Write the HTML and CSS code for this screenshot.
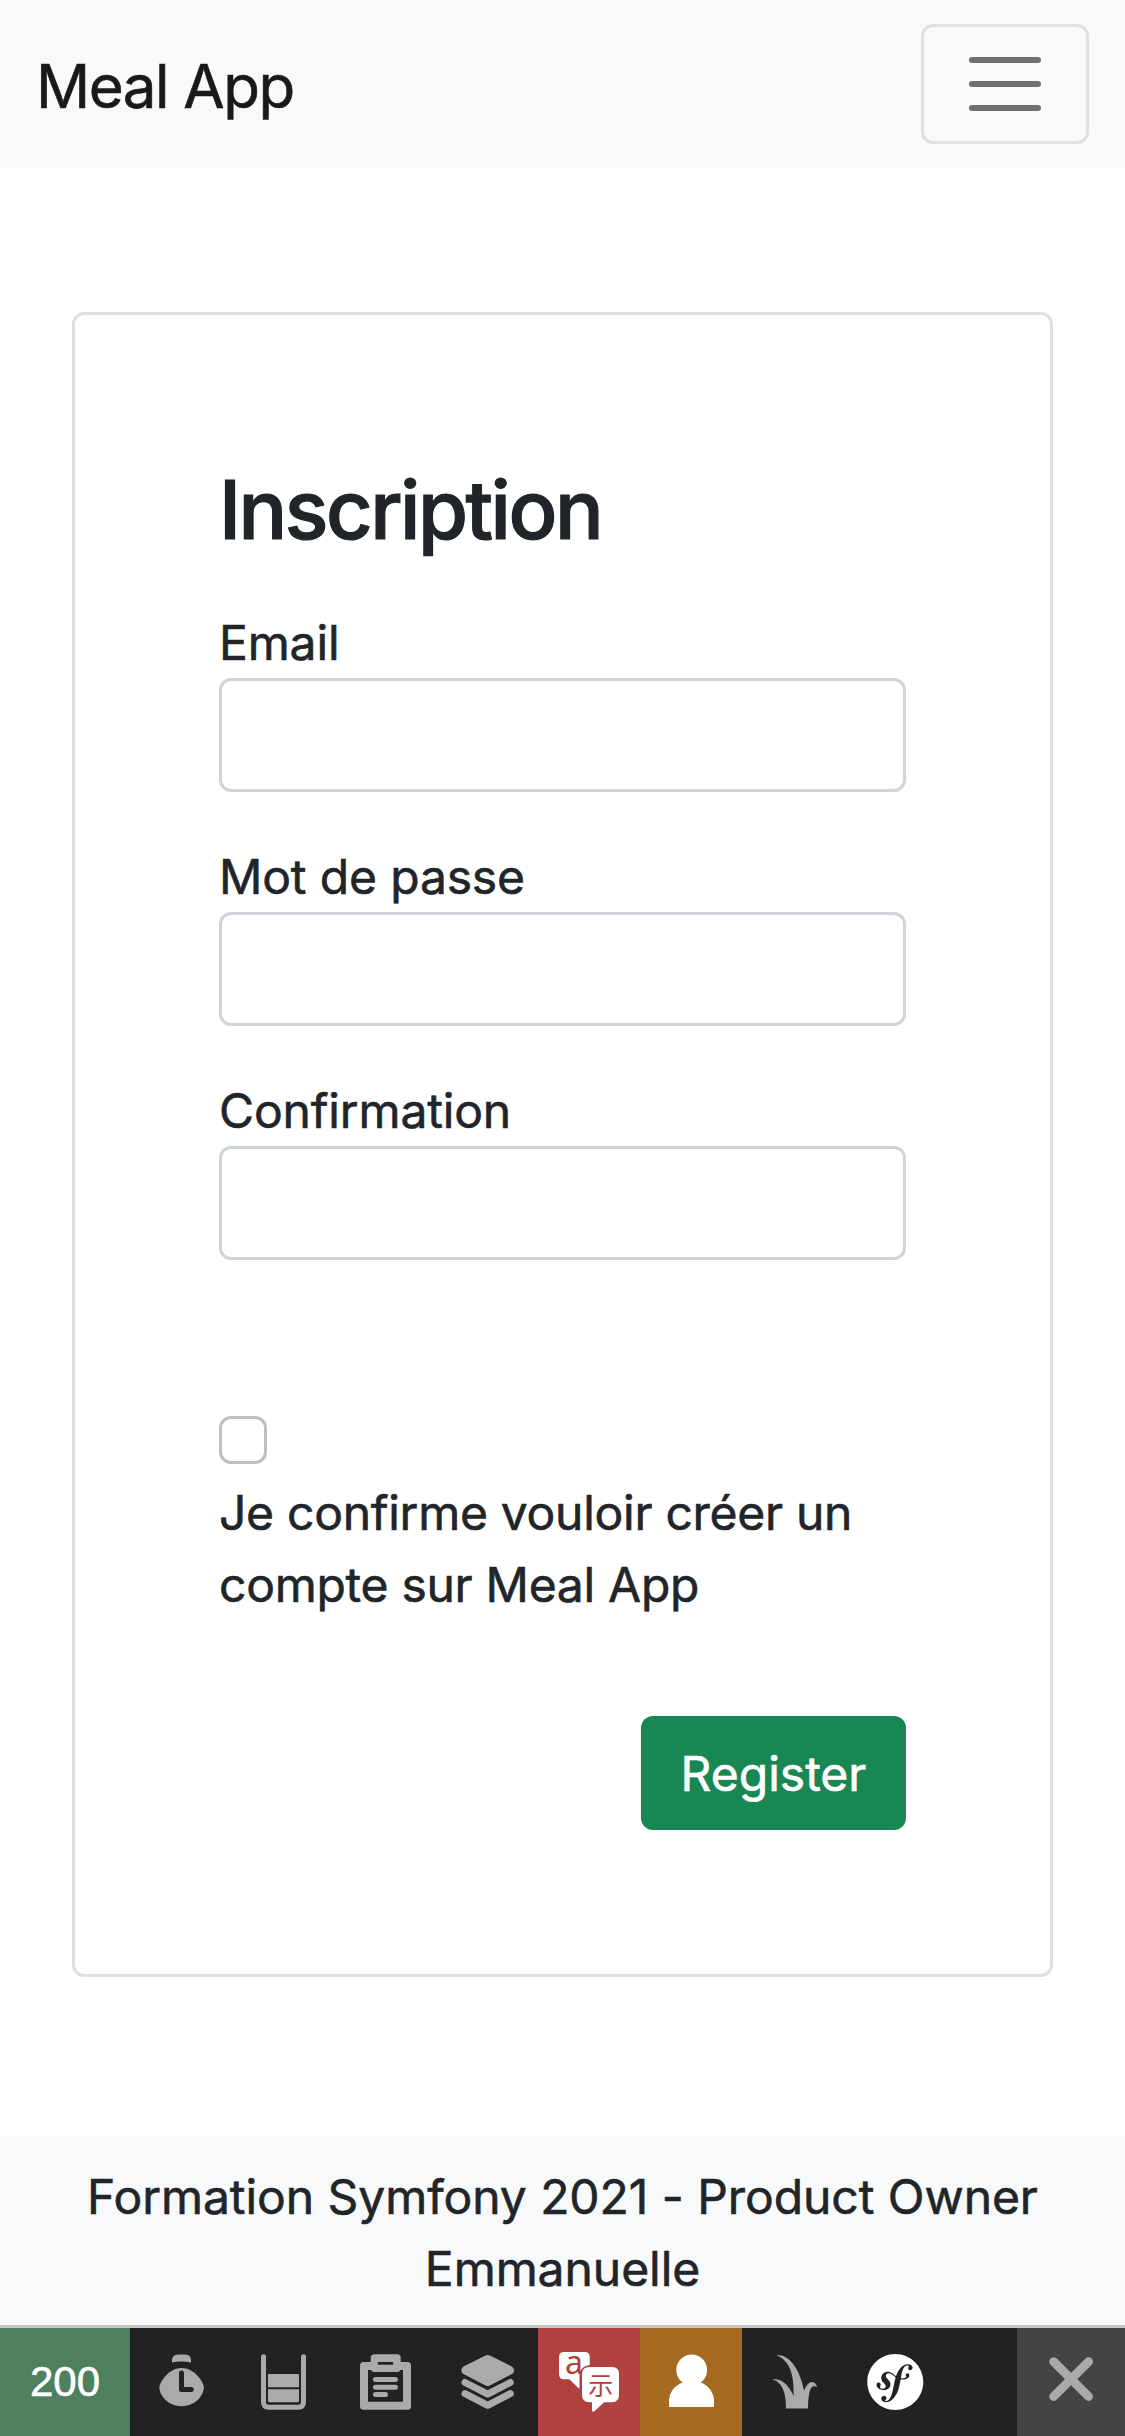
FILE: index.html
```html
<!DOCTYPE html>
<html lang="fr">
<head>
<meta charset="utf-8">
<title>Meal App</title>
<link rel="stylesheet" href="styles.css">
</head>
<body>
<nav class="navbar">
  <a class="brand">Meal App</a>
  <button class="toggler" type="button" aria-label="Menu">
    <span class="bar"></span><span class="bar"></span><span class="bar"></span>
  </button>
</nav>
<main class="main">
  <form class="card">
    <h1 class="title">Inscription</h1>
    <div class="field"><label class="label">Email</label><input class="input" type="text"></div>
    <div class="field"><label class="label">Mot de passe</label><input class="input" type="password"></div>
    <div class="field"><label class="label">Confirmation</label><input class="input" type="password"></div>
    <div class="confirm">
      <input class="check" type="checkbox">
      <label class="label agree">Je confirme vouloir créer un<br>compte sur Meal App</label>
    </div>
    <button class="submit" type="button">Register</button>
  </form>
</main>
<footer class="footer">Formation Symfony 2021 - Product Owner<br>Emmanuelle</footer>
<div class="toolbar">
  <div class="status">200</div>
  <div class="block"><svg class="icon" viewBox="0 0 102 108">
    <path d="M42 34.6V32.5Q42 26.5 48 26.5H55Q61 26.5 61 32.5V34.6Q51.5 32.2 42 34.6Z"/>
    <path d="M29.3 59C31 51.5 40 40 51.6 40S72.3 51.5 73.9 59C73.4 69.5 63.5 78.2 51.6 78.2S29.8 69.5 29.3 59Z"/>
    <path class="cut" d="M51.5 45V61.6H61.3"/>
  </svg></div>
  <div class="block"><svg class="icon" viewBox="0 0 102 108">
    <path class="line" d="M31.5 28.8V74Q31.5 79.2 36.7 79.2H66.3Q71.5 79.2 71.5 74V28.8"/>
    <path d="M36 46.7Q36 46 36.7 46H66.3Q67 46 67 46.7V59.3H36ZM36 61.3H67V72.8Q67 74.3 65.5 74.3H37.5Q36 74.3 36 72.8Z"/>
  </svg></div>
  <div class="block"><svg class="icon" viewBox="0 0 102 108">
    <path fill-rule="evenodd" d="M29.5 34H73.5Q77 34 77 37.5V78.2Q77 81.7 73.5 81.7H29.5Q26 81.7 26 78.2V37.5Q26 34 29.5 34ZM34 42V73.7H69V42Z"/>
    <path fill-rule="evenodd" d="M40.5 26.3H63Q66.7 26.3 66.7 30V40.3Q66.7 44 63 44H40.5Q36.7 44 36.7 40.3V30Q36.7 26.3 40.5 26.3Z"/>
    <path class="hole" d="M43.8 34H59.2V36.7H43.8Z"/>
    <path class="line" d="M41.5 51.5H61.5M41.5 59.2H61.5M41.5 66.6H51.5"/>
  </svg></div>
  <div class="block"><svg class="icon" viewBox="0 0 102 108">
    <path d="M49.5 27.5Q51.7 26.5 53.9 27.5L75.5 38.3Q78 39.7 78 42.4T75.5 46.3L53.9 57.4Q51.7 58.6 49.5 57.4L27.9 46.3Q25.3 45 25.3 42.4T27.9 38.3Z"/>
    <path class="layer" d="M29 54.5L51.7 66.1L74.3 54.5M29 65.6L51.7 77.3L74.3 65.6"/>
  </svg></div>
  <div class="block red"><svg class="icon" viewBox="0 0 102 108">
    <path d="M26 24H47Q51.7 24 51.7 28.7V37Q41.5 38.5 41.5 47V60.3H40.5L31.3 51.3H26Q21 51.3 21 46.3V29Q21 24 26 24Z"/>
    <text class="latin" x="27" y="46">a</text>
    <path d="M51.5 39H74Q81 39 81 46V67Q81 74.3 74 74.3H66.3L56 83.5Q54 84.2 54 82V74.3H51.5Q44 74.3 44 67V46Q44 39 51.5 39Z"/>
    <text class="cjk" x="50.3" y="66.7">示</text>
  </svg></div>
  <div class="block orange"><svg class="icon" viewBox="0 0 102 108">
    <circle cx="51.7" cy="42" r="15.4"/>
    <path d="M43.5 54.3H60C68.5 57 74 65 74 73V79H29V73C29 65 34.5 57 43.5 54.3Z"/>
  </svg></div>
  <div class="block"><svg class="icon" viewBox="0 0 102 108">
    <path d="M44 80.5C44 68 42 54 30 51.4C41 50.2 46.5 57.5 51.7 68C52 50 49.5 33 34.7 27.4C49.5 26 59 46 62 62.7C65.5 54 72 50.5 75.3 59C68.5 56 66.5 62 66 80.5Z"/>
  </svg></div>
  <div class="block"><svg class="icon white" viewBox="0 0 102 108">
    <path transform="translate(23.3 26) scale(2.333)" d="M24 12c0 6.628-5.372 12-12 12S0 18.628 0 12 5.372 0 12 0s12 5.372 12 12zm-6.753-7.561c-1.22.042-2.283.715-3.075 1.644-.878 1.02-1.461 2.229-1.881 3.461-.753-.614-1.332-1.414-2.539-1.761-.966-.297-2.015-.105-2.813.514-.41.319-.71.757-.861 1.254-.36 1.176.381 2.225.719 2.6l.737.79c.15.154.519.56.339 1.138-.193.631-.951 1.037-1.732.799-.348-.106-.848-.366-.734-.73.045-.15.152-.263.21-.391.052-.11.077-.194.095-.242.141-.465-.053-1.07-.551-1.223-.465-.143-.939-.03-1.125.566-.209.68.117 1.913 1.86 2.449 2.04.628 3.765-.484 4.009-1.932.153-.907-.255-1.582-1.006-2.447l-.612-.677c-.371-.37-.497-1.002-.114-1.485.324-.409.785-.584 1.539-.379 1.103.3 1.594 1.063 2.412 1.68-.338 1.11-.56 2.223-.759 3.222l-.123.746c-.585 3.07-1.033 4.757-2.194 5.726-.234.166-.57.416-1.073.434-.266.005-.352-.176-.355-.257-.006-.184.15-.271.255-.353.154-.083.39-.224.372-.674-.016-.532-.456-.994-1.094-.973-.477.017-1.203.465-1.176 1.286.028.85.819 1.485 2.012 1.444.638-.021 2.062-.281 3.464-1.949 1.633-1.911 2.09-4.101 2.434-5.706l.383-2.117c.213.024.441.042.69.048 2.032.044 3.049-1.01 3.064-1.776.01-.464-.304-.921-.744-.91-.314.009-.708.218-.803.654-.094.428.646.813.068 1.188-.41.266-1.146.452-2.184.3l.188-1.042c.386-1.976.859-4.407 2.659-4.466.132-.007.612.006.623.323.003.105-.022.134-.147.375-.115.155-.174.345-.168.537.017.504.403.836.957.816.743-.023.955-.748.945-1.119-.032-.874-.952-1.424-2.17-1.386z"/>
  </svg></div>
  <div class="close"><svg class="icon" viewBox="0 0 108 108">
    <path class="cross" d="M36.7 33.7L71.6 68.5M71.6 33.7L36.7 68.5"/>
  </svg></div>
</div>
</body>
</html>
```
FILE: styles.css
```css
* { box-sizing: border-box; }
body {
  margin: 0;
  height: 2436px;
  display: flex;
  flex-direction: column;
  background: #fff;
  color: #212529;
  font: 400 48px/72px Inter, "Liberation Sans", sans-serif;
  letter-spacing: -0.15px;
  -webkit-text-stroke: 0.6px currentColor;
}
.navbar {
  height: 168px;
  padding: 0 36px;
  display: flex;
  align-items: center;
  justify-content: space-between;
  background: #f8f9fb;
}
.brand { padding-top: 3px; font-size: 60px; line-height: 90px; letter-spacing: -1.5px; color: #191919; }
.toggler {
  width: 168px;
  height: 120px;
  padding: 0;
  display: flex;
  flex-direction: column;
  align-items: center;
  justify-content: center;
  gap: 18px;
  border: 3px solid #dfe0e2;
  border-radius: 12px;
  background: none;
}
.bar { width: 72px; height: 6px; border-radius: 3px; background: #6f7071; }
.main { padding: 144px 72px 0; height: 1968px; }
.card {
  height: 1665.4px;
  padding: 144px;
  display: flex;
  flex-direction: column;
  border: 3px solid #dfdfdf;
  border-radius: 12px;
}
.title {
  height: 99.4px;
  margin: 0 0 48px;
  padding-top: 2px;
  font-size: 81px;
  line-height: 99.4px;
  font-weight: 500;
  letter-spacing: -2.5px;
  -webkit-text-stroke-width: 1.2px;
}
.field { margin-bottom: 48px; }
.label { display: block; height: 72px; padding-top: 1px; }
.agree { height: 144px; letter-spacing: -0.28px; }
.input {
  display: block;
  width: 100%;
  height: 114px;
  border: 3px solid #ced4da;
  border-radius: 12px;
  background: #fff;
}
.confirm { margin-top: 108px; }
.check {
  appearance: none;
  display: block;
  width: 48px;
  height: 48px;
  margin: 0 0 12px;
  border: 3px solid #bfbfbf;
  border-radius: 12px;
}
.submit {
  align-self: flex-end;
  width: 265px;
  height: 114px;
  margin-top: 96px;
  padding: 2px 0 0;
  border: 0;
  border-radius: 12px;
  background: #198754;
  color: #fff;
  font: inherit;
  letter-spacing: 0;
}
.footer { height: 189px; padding-top: 25px; background: #f8f9fb; text-align: center; letter-spacing: -0.06px; }
.toolbar { height: 111px; display: flex; border-top: 3px solid #c5c5c5; background: #222; letter-spacing: 0; -webkit-text-stroke-width: 0; }
.status {
  width: 130px;
  background: #4f805d;
  color: #fff;
  text-align: center;
  font: 42px/108px "Liberation Sans", Arial, sans-serif;
  -webkit-text-stroke: 0.6px #fff;
}
.block { width: 102px; }
.red { background: #b0413e; }
.orange { background: #a46a1f; }
.close { width: 108px; margin-left: auto; background: #444; }
.icon { display: block; width: 100%; height: 108px; fill: #aaa; }
.red .icon, .orange .icon, .white { fill: #fff; }
.line, .layer, .cross, .cut { fill: none; stroke: #aaa; stroke-width: 5; stroke-linecap: round; stroke-linejoin: round; }
.layer { stroke-width: 7; }
.cross { stroke-width: 8.8; }
.cut { stroke: #222; }
.hole { fill: #222; }
.latin { font: 32px "Noto Sans", sans-serif; fill: #b0413e; }
.cjk { font: 25px "Noto Sans CJK SC", sans-serif; fill: #b0413e; }
```
